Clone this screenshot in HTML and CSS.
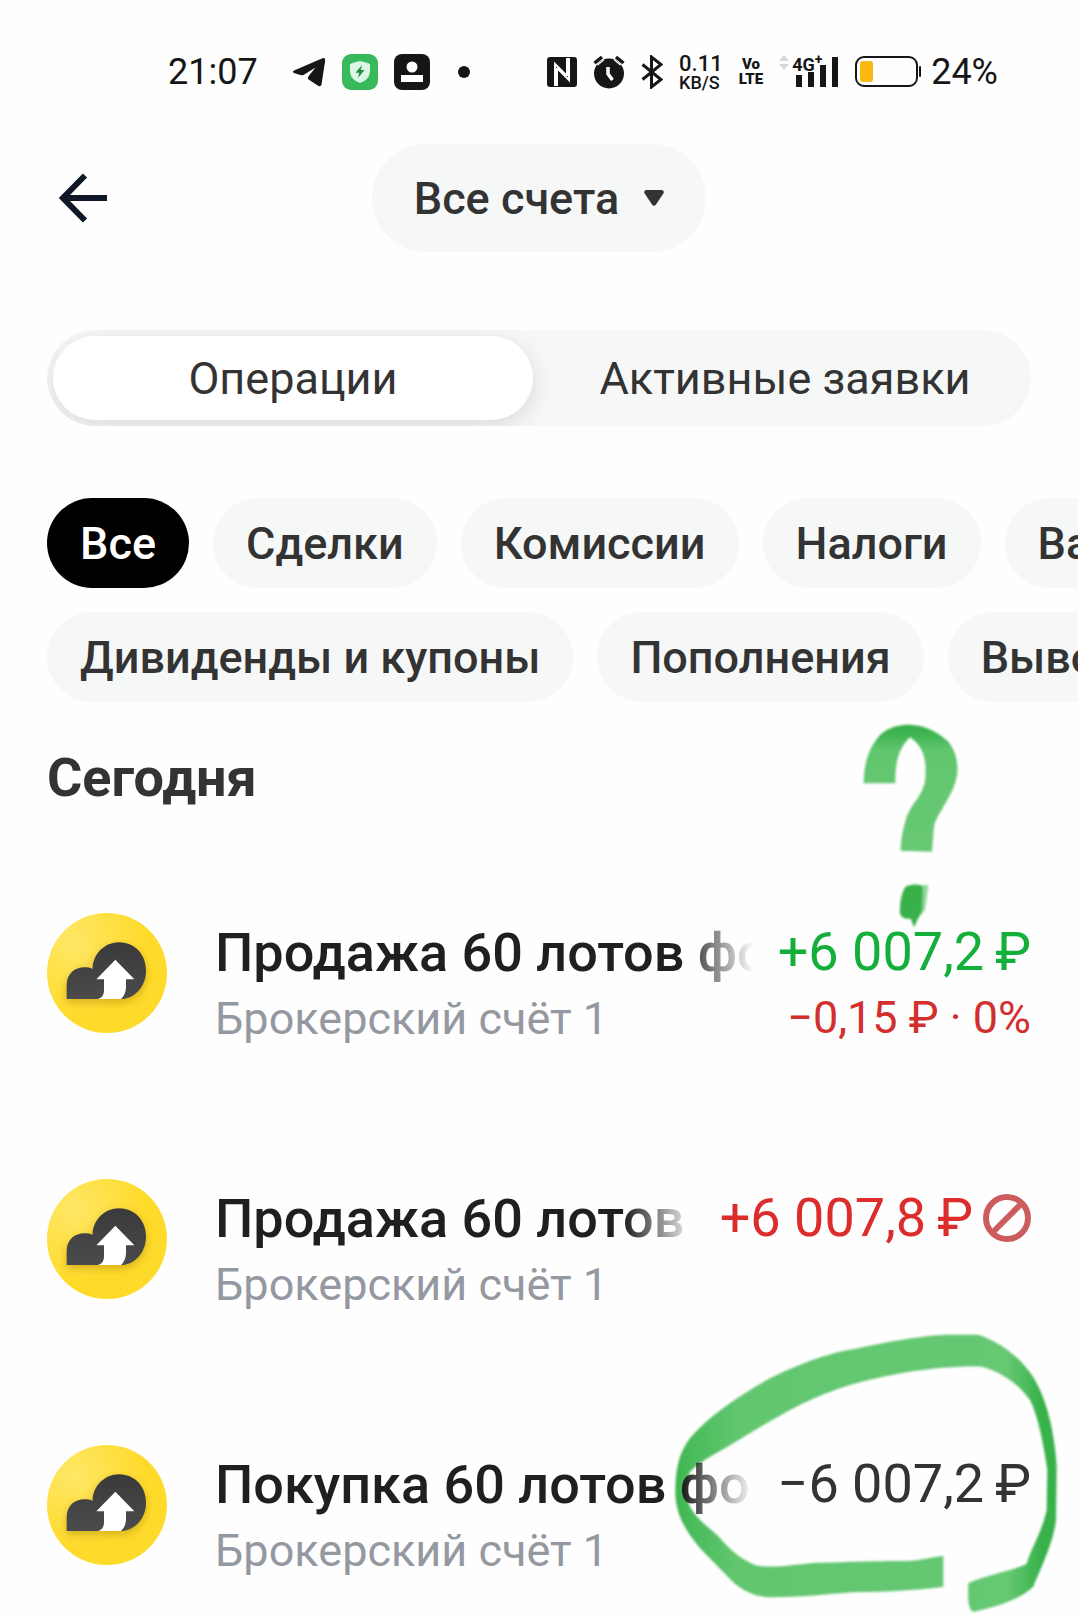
FILE: index.html
```html
<!DOCTYPE html>
<html lang="ru">
<head>
<meta charset="UTF-8">
<meta name="viewport" content="width=device-width, initial-scale=1.0">
<title>Операции</title>
<link rel="stylesheet" href="styles.css">
</head>
<body>

<!-- общие иконки -->
<svg class="defs" aria-hidden="true">
<defs>
<radialGradient id="gold" cx="0.22" cy="0.25" r="0.6">
<stop offset="0" stop-color="#ffe767"/>
<stop offset="1" stop-color="#fedb2b"/>
</radialGradient>
<linearGradient id="coal" x1="0" y1="0" x2="0" y2="1">
<stop offset="0" stop-color="#3a3a3a"/>
<stop offset="1" stop-color="#4b4b4b"/>
</linearGradient>
</defs>
<symbol id="fund" viewBox="51 68 360 360">
<circle cx="231" cy="248" r="180" fill="url(#gold)"/>
<path class="cloud" fill="url(#coal)" d="M110 326V285C110 250 135 231 163 231C172 231 180 232 188 236C188 190 225 156 267 156C312 156 348 190 348 241C348 290 312 326 273 326Z"/>
<path fill="#fff" d="M256 208L313 267H288V290C288 305 282 318 273 326H203C215 324 222 315 222 300V267H199Z"/>
</symbol>
</svg>

<div class="status">
<div class="status-left">
<span class="clock">21:07</span>
<svg class="telegram" width="34" height="30" viewBox="0 0 34 30"><path d="M2 13.500L30.500 1.200Q33.500 0.500 33.200 3.500L29.500 27.500Q28.800 30 26.500 29L16.500 22.500Q15 21 16.500 19.200L23.500 10.500L11.500 18Q9.500 18.600 7.500 17.800L2 16Q0 15 2 13.500Z" fill="#161616"/></svg>
<svg width="36" height="36" viewBox="0 0 36 36">
<rect width="36" height="36" rx="9" fill="#37b95c"/>
<path d="M18 7Q23 8 28 10V18Q27 26 18 29Q9 26 8 18V10Q13 8 18 7Z" fill="#d9f7e3"/>
<path d="M20 11L13.500 18.800H17.200L16 24L22.500 16H18.700Z" fill="#1e8c43"/>
</svg>
<svg width="36" height="36" viewBox="0 0 36 36">
<rect width="36" height="36" rx="8" fill="#161616"/>
<circle cx="18" cy="13" r="5.500" fill="#fff"/>
<rect x="7" y="21" width="22" height="7" fill="#fff"/>
</svg>
<span class="dot"></span>
</div>
<div class="status-right">
<svg width="30" height="30" viewBox="0 0 30 30">
<rect width="30" height="30" rx="3" fill="#161616"/>
<path d="M8 29V7L20 19M10 11V29M22 1V23L10 11M20 19V1" fill="none" stroke="#fff" stroke-width="2"/>
</svg>
<svg width="32" height="34" viewBox="0 0 32 34">
<circle cx="16" cy="18.500" r="15" fill="#161616"/>
<path d="M1.500 8L9 2M30.500 8L23 2" stroke="#161616" stroke-width="3.500"/>
<path d="M4.500 10L11 4.500M27.500 10L21 4.500" stroke="#fff" stroke-width="1.500"/>
<path d="M15 12V19L19.500 25" fill="none" stroke="#fff" stroke-width="3.500"/>
</svg>
<svg class="bluetooth" width="22" height="34" viewBox="0 0 22 34"><path d="M1.500 9.500L20 24.500L10.500 32V2L20 9.500L1.500 24.500" fill="none" stroke="#161616" stroke-width="3"/></svg>
<span class="speed"><b>0.11</b>KB/S</span>
<span class="volte"><span>Vo</span><span>LTE</span></span>
<span class="signal">
<svg width="60" height="34" viewBox="0 0 60 34">
<path d="M0 6L5 0L10 6ZM0 9H10L5 15Z" fill="#d8d8d8"/>
<path d="M17 20H23V32H17ZM29 17H35V32H29ZM41 10H47V32H41ZM53 2H59V32H53Z" fill="#161616"/>
</svg>
<span class="net">4G<sup>+</sup></span>
</span>
<svg class="battery" width="67" height="32" viewBox="0 0 67 32">
<rect x="1" y="1" width="61" height="29" rx="8" fill="none" stroke="#161616" stroke-width="2"/>
<rect x="5" y="5" width="13" height="21" rx="3" fill="#fbb911"/>
<rect x="64" y="10" width="2" height="11" rx="1" fill="#161616"/>
</svg>
<span class="percent">24%</span>
</div>
</div>

<header class="header">
<button class="back" aria-label="Назад">
<svg width="48" height="50" viewBox="0 0 48 50"><path d="M26 2.500L4 25L26 47.500M3 25H48" fill="none" stroke="#101828" stroke-width="6"/></svg>
</button>
<button class="account">Все счета
<svg width="20" height="16" viewBox="0 0 20 16"><path d="M2 0H18Q21 1 19 4L12 14.500Q10 17 8 14.500L1 4Q-1 1 2 0Z" fill="#333"/></svg>
</button>
</header>

<main>
<div class="tabs" role="tablist">
<button class="tab active" role="tab" aria-selected="true">Операции</button>
<button class="tab" role="tab" aria-selected="false">Активные заявки</button>
</div>

<div class="filters">
<div class="filter-row">
<button class="chip selected">Все</button>
<button class="chip">Сделки</button>
<button class="chip">Комиссии</button>
<button class="chip">Налоги</button>
<button class="chip">Валюта</button>
</div>
<div class="filter-row">
<button class="chip">Дивиденды и купоны</button>
<button class="chip">Пополнения</button>
<button class="chip">Выводы</button>
</div>
</div>

<h1>Сегодня</h1>

<ul class="operations">
<li class="operation">
<svg class="mark question" viewBox="669 72 288 615" aria-hidden="true">
<defs>
<linearGradient id="ink-top" x1="0" y1="0" x2="0" y2="1">
<stop offset="0" stop-color="#38b14a"/>
<stop offset="0.08" stop-color="#40b552"/>
<stop offset="0.2" stop-color="#62c66f"/>
<stop offset="1" stop-color="#68c874"/>
</linearGradient>
</defs>
<path fill="url(#ink-top)" d="M671 250C672 180 690 140 720 105C745 80 780 74 810 74C850 75 890 92 925 125C948 155 954 185 952 220C945 270 920 300 905 330C882 365 882 375 880 405L876 455L782 452C783 400 795 370 800 350C815 310 845 290 855 245C860 190 858 145 810 112C775 145 765 190 766 250Z"/>
<path fill="#8fd698" d="M800 558L865 555L855 630L835 655L790 650Z"/>
<path fill="#38b14a" d="M795 562Q815 548 848 558L846 630L822 682L812 656Q775 660 780 625Q780 590 795 562Z"/>
</svg>
<svg class="logo" aria-hidden="true"><use href="#fund"/></svg>
<div class="info">
<div class="title">Продажа 60 лотов фо</div>
<div class="sub">Брокерский счёт 1</div>
</div>
<div class="sum">
<div class="amount plus">+6 007,2&thinsp;₽</div>
<div class="change">−0,15 ₽ · 0%</div>
</div>
</li>
<li class="operation">
<svg class="logo" aria-hidden="true"><use href="#fund"/></svg>
<div class="info">
<div class="title">Продажа 60 лотов</div>
<div class="sub">Брокерский счёт 1</div>
</div>
<div class="sum">
<div class="amount rejected">+6 007,8&thinsp;₽
<svg width="48" height="48" viewBox="0 0 48 48"><circle cx="24" cy="24" r="21" fill="none" stroke="#cd5c5f" stroke-width="6"/><path d="M9 39L39 9" stroke="#cd5c5f" stroke-width="6"/></svg>
</div>
</div>
</li>
<li class="operation">
<svg class="mark circle" viewBox="105 522 1149 840" aria-hidden="true">
<defs>
<linearGradient id="ink-sides" x1="0" y1="0" x2="1" y2="0">
<stop offset="0" stop-color="#3db550"/>
<stop offset="0.05" stop-color="#4bbc5c"/>
<stop offset="0.16" stop-color="#62c66f"/>
<stop offset="0.87" stop-color="#66c873"/>
<stop offset="0.96" stop-color="#38b14a"/>
</linearGradient>
</defs>
<path fill="url(#ink-sides)" d="M910 1188L910 1280C840 1290 750 1295 640 1297C560 1302 480 1312 400 1312C340 1312 300 1290 265 1252L180 1165C140 1115 108 1070 106 1000C106 930 115 880 150 835C200 775 290 710 390 655C500 600 600 572 640 568C740 545 850 526 920 524L1015 524C1090 550 1150 600 1185 660C1225 730 1245 830 1250 920L1248 1080C1240 1150 1200 1230 1180 1280C1130 1325 1050 1345 1000 1355C985 1350 983 1320 985 1270C1040 1245 1110 1235 1160 1212C1170 1170 1205 1120 1220 1050L1222 930C1210 850 1195 770 1170 720C1130 665 1080 635 1025 620C950 618 870 625 800 637C700 655 640 670 580 692C480 725 380 790 280 850C220 885 180 905 150 935C138 975 138 1010 150 1040C180 1090 220 1110 245 1140C280 1180 330 1218 370 1219C420 1222 480 1212 530 1208C600 1208 640 1203 800 1203C840 1203 880 1190 910 1188Z"/>
</svg>
<svg class="logo" aria-hidden="true"><use href="#fund"/></svg>
<div class="info">
<div class="title">Покупка 60 лотов фо</div>
<div class="sub">Брокерский счёт 1</div>
</div>
<div class="sum">
<div class="amount">−6 007,2&thinsp;₽</div>
</div>
</li>
</ul>
</main>

</body>
</html>
```
FILE: styles.css
```css
* {
box-sizing: border-box;
}

body {
margin: 0;
background-color: #fefefe;
color: #333;
font-family: Roboto, "Noto Sans", sans-serif;
font-size: 45px;
overflow-x: hidden;
}

button {
border: none;
padding: 0;
background: none;
color: inherit;
font: inherit;
white-space: nowrap;
cursor: pointer;
}

svg {
display: block;
flex: none;
}

.defs {
position: absolute;
width: 0;
height: 0;
}

/* Строка состояния */
.status {
display: flex;
justify-content: space-between;
align-items: center;
height: 144px;
padding: 0 80px 0 168px;
color: #161616;
font-size: 36px;
}

.status-left, .status-right {
display: flex;
align-items: center;
}

.status-left {
gap: 16px;
}

.telegram {
margin-left: 18px;
}

.dot {
width: 12px;
height: 12px;
margin-left: 12px;
border-radius: 50%;
background-color: #161616;
}

.status-right {
gap: 16px;
}

.speed {
display: flex;
flex-direction: column;
font-size: 18px;
line-height: 16px;
font-weight: 500;
}

.speed b {
font-size: 22px;
line-height: 22px;
font-weight: 500;
}

.volte {
display: flex;
flex-direction: column;
align-items: center;
font-size: 15px;
line-height: 15px;
font-weight: 900;
}

.signal {
position: relative;
}

.net {
position: absolute;
top: 0;
left: 13px;
font-size: 18px;
line-height: 16px;
font-weight: 700;
white-space: nowrap;
}

.net sup {
font-size: 14px;
line-height: 8px;
}

.percent {
margin-left: -7px;
}

/* Шапка */
.header {
display: grid;
grid-template-columns: 1fr auto 1fr;
align-items: center;
padding: 0 47px;
}

.back {
justify-self: start;
padding: 12px;
}

.account {
display: flex;
align-items: center;
gap: 25px;
height: 108px;
padding: 0 42px;
border-radius: 54px;
background-color: #f6f8f8;
font-weight: 500;
}

/* Вкладки */
.tabs {
display: grid;
grid-template-columns: 1fr 1fr;
column-gap: 12px;
margin: 78px 47px 72px;
height: 96px;
padding: 6px;
border-radius: 48px;
background-color: #f6f8f8;
overflow: hidden;
}

.tab {
border-radius: 42px;
}

.tab.active {
background-color: #fff;
box-shadow: 0 6px 24px rgba(0, 0, 0, 0.12);
}

/* Фильтры */
.filters {
display: flex;
flex-direction: column;
gap: 24px;
}

.filter-row {
display: flex;
gap: 24px;
padding-left: 47px;
overflow: hidden;
}

.chip {
flex: none;
height: 90px;
padding: 0 33px;
border-radius: 45px;
background-color: #f6f8f8;
font-weight: 500;
}

.chip.selected {
background-color: #000;
color: #fff;
}

h1 {
margin: 46px 47px 105px;
font-size: 54px;
line-height: 60px;
font-weight: 700;
}

/* Список операций */
.operations {
display: flex;
flex-direction: column;
gap: 132px;
margin: 0;
padding: 0 47px 36px;
list-style: none;
}

.operation {
position: relative;
display: flex;
height: 134px;
}

.logo {
width: 120px;
height: 120px;
margin-right: 48px;
}

.cloud {
filter: drop-shadow(0 10px 12px rgba(150, 110, 0, 0.4));
}

.info {
position: relative;
flex: 1;
min-width: 0;
padding-top: 8px;
}

.title {
overflow: hidden;
color: #1f1f1f;
font-size: 54px;
line-height: 64px;
font-weight: 500;
white-space: nowrap;
-webkit-mask-image: linear-gradient(to right, #000 calc(100% - 72px), transparent);
mask-image: linear-gradient(to right, #000 calc(100% - 72px), transparent);
}

.sub, .change {
margin-top: 7px;
line-height: 54px;
}

.sub {
color: #9498a0;
}

.sum {
position: relative;
padding-top: 7px;
margin-left: 24px;
text-align: right;
white-space: nowrap;
}

.amount {
display: flex;
justify-content: flex-end;
align-items: center;
gap: 10px;
font-size: 54px;
line-height: 64px;
}

.plus {
color: #14ae3a;
}

.rejected {
color: #dc2c2c;
}

.change {
color: #d32f2f;
}

/* Пометки маркером */
.mark {
position: absolute;
pointer-events: none;
filter: blur(1px);
}

.question {
top: -189px;
right: 72px;
width: 96px;
height: 205px;
}

.circle {
top: -111px;
right: -27px;
width: 383px;
height: 280px;
}
```
